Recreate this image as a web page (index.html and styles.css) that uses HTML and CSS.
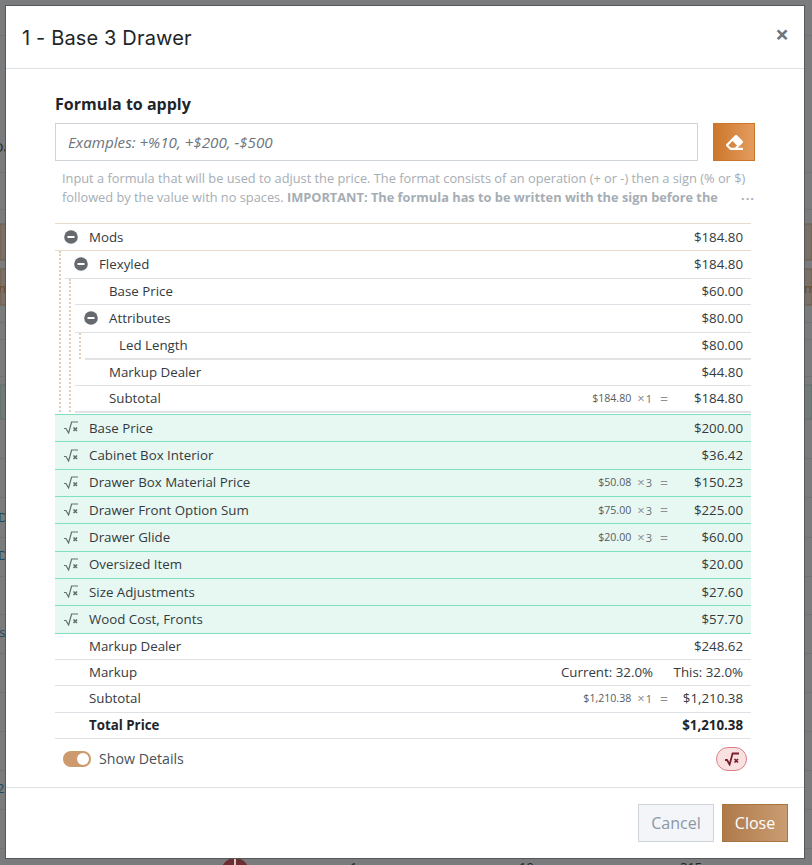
FILE: index.html
```html
<!DOCTYPE html>
<html lang="en">
<head>
<meta charset="utf-8">
<title>1 - Base 3 Drawer</title>
<link rel="stylesheet" href="styles.css">
</head>
<body>
<svg class="backdrop" width="812" height="865" aria-hidden="true">
  <g class="bd-line">
    <rect y="35" width="812" height="1"/><rect y="172" width="812" height="1"/><rect y="209" width="812" height="1"/>
    <rect y="322" width="812" height="1"/><rect y="339" width="812" height="1"/><rect y="376" width="812" height="1"/>
    <rect y="458" width="812" height="1"/><rect y="497" width="812" height="1"/><rect y="537" width="812" height="1"/>
    <rect y="576" width="812" height="1"/><rect y="614" width="812" height="1"/><rect y="653" width="812" height="1"/>
    <rect y="692" width="812" height="1"/><rect y="731" width="812" height="1"/><rect y="770" width="812" height="1"/>
    <rect y="809" width="812" height="1"/><rect y="848" width="812" height="1"/>
  </g>
  <rect class="bd-brown" y="224" width="812" height="36"/>
  <rect class="bd-brown" y="269" width="812" height="36"/>
  <rect class="bd-teal" y="385" width="812" height="34"/>
  <text class="bd-text" x="-6" y="152">Da</text>
  <text class="bd-text bd-brown-text" x="-6" y="293">m</text>
  <text class="bd-text bd-brown-text" x="804" y="293">m</text>
  <text class="bd-text bd-link" x="-2" y="522">D</text>
  <text class="bd-text bd-link" x="-2" y="560">D</text>
  <text class="bd-text bd-link" x="-8" y="637">es</text>
  <text class="bd-text bd-link" x="-3" y="793">2</text>
  <circle class="bd-dot" cx="235" cy="872" r="14"/>
  <rect class="bd-mark" x="234" y="858" width="2" height="7"/>
  <text class="bd-text" x="350" y="872">1</text>
  <text class="bd-text" x="519" y="872">10</text>
  <text class="bd-text" x="680" y="872">215</text>
</svg>

<section class="modal">
  <header class="modal-head">
    <h1 class="modal-title">1 - Base 3 Drawer</h1>
    <span class="modal-x">×</span>
  </header>

  <div class="modal-body">
    <label class="field-label">Formula to apply</label>
    <div class="field-row">
      <input class="field-input" type="text" placeholder="Examples: +%10, +$200, -$500">
      <button class="erase-btn" type="button" aria-label="Clear">
        <svg class="erase-icon" viewBox="0 0 512 512"><path d="M497.941 273.941c18.745-18.745 18.745-49.137 0-67.882l-160-160c-18.745-18.745-49.137-18.745-67.882 0l-256 256c-18.745 18.745-18.745 49.137 0 67.882l96 96A48.004 48.004 0 0 0 144 480h356c6.627 0 12-5.373 12-12v-40c0-6.627-5.373-12-12-12H355.883l142.058-142.059zm-302.627-62.627l137.373 137.373L265.373 416H150.628l-80-80 124.686-124.686z"/></svg>
      </button>
    </div>
    <div class="help">
      <div class="help-line">Input a formula that will be used to adjust the price. The format consists of an operation (+ or -) then a sign (% or $)</div>
      <div class="help-line help-last"><span>followed by the value with no spaces. <b>IMPORTANT: The formula has to be written with the sign before the</b></span><span class="help-more">···</span></div>
    </div>

    <div class="tree">
      <div class="row row-top h27 border-tan">
        <span class="glyph"><svg class="minus" viewBox="0 0 14 14"><circle cx="7" cy="7" r="6.8"/><rect x="3.5" y="6" width="7" height="2"/></svg></span>
        <span class="name">Mods</span><span class="amount">$184.80</span>
      </div>
      <div class="kids">
        <div class="row h28">
          <span class="glyph"><svg class="minus" viewBox="0 0 14 14"><circle cx="7" cy="7" r="6.8"/><rect x="3.5" y="6" width="7" height="2"/></svg></span>
          <span class="name">Flexyled</span><span class="amount">$184.80</span>
        </div>
        <div class="kids kids-end">
          <div class="row h26"><span class="glyph"></span><span class="name">Base Price</span><span class="amount">$60.00</span></div>
          <div class="row h28">
            <span class="glyph"><svg class="minus" viewBox="0 0 14 14"><circle cx="7" cy="7" r="6.8"/><rect x="3.5" y="6" width="7" height="2"/></svg></span>
            <span class="name">Attributes</span><span class="amount">$80.00</span>
          </div>
          <div class="kids kids-end">
            <div class="row h26"><span class="glyph"></span><span class="name">Led Length</span><span class="amount">$80.00</span></div>
          </div>
          <div class="row h26"><span class="glyph"></span><span class="name">Markup Dealer</span><span class="amount">$44.80</span></div>
          <div class="row h26"><span class="glyph"></span><span class="name">Subtotal</span><span class="calc"><span class="calc-price">$184.80</span><span class="calc-qty"><i>×</i>1</span><span class="calc-eq">=</span></span><span class="amount">$184.80</span></div>
        </div>
      </div>

      <div class="green-list">
        <div class="row green"><span class="glyph"><svg class="root" viewBox="0 0 16 13"><path class="root-s" d="M1 7.5h2l2.6 4.5L8.6 1H15"/><path class="root-x" d="M10.5 6.5l3.5 3.5m0-3.5l-3.5 3.5"/></svg></span><span class="name">Base Price</span><span class="amount">$200.00</span></div>
        <div class="row green"><span class="glyph"><svg class="root" viewBox="0 0 16 13"><path class="root-s" d="M1 7.5h2l2.6 4.5L8.6 1H15"/><path class="root-x" d="M10.5 6.5l3.5 3.5m0-3.5l-3.5 3.5"/></svg></span><span class="name">Cabinet Box Interior</span><span class="amount">$36.42</span></div>
        <div class="row green"><span class="glyph"><svg class="root" viewBox="0 0 16 13"><path class="root-s" d="M1 7.5h2l2.6 4.5L8.6 1H15"/><path class="root-x" d="M10.5 6.5l3.5 3.5m0-3.5l-3.5 3.5"/></svg></span><span class="name">Drawer Box Material Price</span><span class="calc"><span class="calc-price">$50.08</span><span class="calc-qty"><i>×</i>3</span><span class="calc-eq">=</span></span><span class="amount">$150.23</span></div>
        <div class="row green"><span class="glyph"><svg class="root" viewBox="0 0 16 13"><path class="root-s" d="M1 7.5h2l2.6 4.5L8.6 1H15"/><path class="root-x" d="M10.5 6.5l3.5 3.5m0-3.5l-3.5 3.5"/></svg></span><span class="name">Drawer Front Option Sum</span><span class="calc"><span class="calc-price">$75.00</span><span class="calc-qty"><i>×</i>3</span><span class="calc-eq">=</span></span><span class="amount">$225.00</span></div>
        <div class="row green"><span class="glyph"><svg class="root" viewBox="0 0 16 13"><path class="root-s" d="M1 7.5h2l2.6 4.5L8.6 1H15"/><path class="root-x" d="M10.5 6.5l3.5 3.5m0-3.5l-3.5 3.5"/></svg></span><span class="name">Drawer Glide</span><span class="calc"><span class="calc-price">$20.00</span><span class="calc-qty"><i>×</i>3</span><span class="calc-eq">=</span></span><span class="amount">$60.00</span></div>
        <div class="row green"><span class="glyph"><svg class="root" viewBox="0 0 16 13"><path class="root-s" d="M1 7.5h2l2.6 4.5L8.6 1H15"/><path class="root-x" d="M10.5 6.5l3.5 3.5m0-3.5l-3.5 3.5"/></svg></span><span class="name">Oversized Item</span><span class="amount">$20.00</span></div>
        <div class="row green"><span class="glyph"><svg class="root" viewBox="0 0 16 13"><path class="root-s" d="M1 7.5h2l2.6 4.5L8.6 1H15"/><path class="root-x" d="M10.5 6.5l3.5 3.5m0-3.5l-3.5 3.5"/></svg></span><span class="name">Size Adjustments</span><span class="amount">$27.60</span></div>
        <div class="row green"><span class="glyph"><svg class="root" viewBox="0 0 16 13"><path class="root-s" d="M1 7.5h2l2.6 4.5L8.6 1H15"/><path class="root-x" d="M10.5 6.5l3.5 3.5m0-3.5l-3.5 3.5"/></svg></span><span class="name">Wood Cost, Fronts</span><span class="amount">$57.70</span></div>
      </div>

      <div class="row h-end"><span class="glyph"></span><span class="name">Markup Dealer</span><span class="amount">$248.62</span></div>
      <div class="row h-end"><span class="glyph"></span><span class="name">Markup</span><span class="markup-now">Current: 32.0%</span><span class="amount">This: 32.0%</span></div>
      <div class="row h-end"><span class="glyph"></span><span class="name">Subtotal</span><span class="calc"><span class="calc-price">$1,210.38</span><span class="calc-qty"><i>×</i>1</span><span class="calc-eq">=</span></span><span class="amount">$1,210.38</span></div>
      <div class="row h-end row-total"><span class="glyph"></span><span class="name">Total Price</span><span class="amount">$1,210.38</span></div>
    </div>

    <div class="details">
      <span class="toggle"><span class="toggle-knob"></span></span>
      <span class="details-label">Show Details</span>
      <span class="formula-pill"><svg class="root root-strong" viewBox="0 0 16 13"><path class="root-s" d="M1 7.5h2l2.6 4.5L8.6 1H15"/><path class="root-x" d="M10.5 6.5l3.5 3.5m0-3.5l-3.5 3.5"/></svg></span>
    </div>
  </div>

  <footer class="modal-foot">
    <button class="btn btn-cancel" type="button">Cancel</button>
    <button class="btn btn-close" type="button">Close</button>
  </footer>
</section>
</body>
</html>
```
FILE: styles.css
```css
* { box-sizing: border-box; }
html, body { margin: 0; height: 100%; }
body {
  position: relative;
  overflow: hidden;
  background: #7a7b7c;
  font-family: "Open Sans", sans-serif;
  color: #343a40;
  padding: 6px 8px 0 6px;
}
.backdrop { position: absolute; left: 0; top: 0; }
.bd-line rect { fill: #6f7273; }
.bd-brown { fill: #7a7066; stroke: #6f5d48; }
.bd-teal { fill: #6f7a79; stroke: #5f6f6d; }
.bd-text { font: 13px "Open Sans", sans-serif; fill: #22262a; }
.bd-brown-text { fill: #6b4a22; }
.bd-link { fill: #1a4a60; }
.bd-dot { fill: #6b2f32; }
.bd-mark { fill: #d8c8c8; }

.modal {
  position: relative;
  width: 798px;
  height: 852px;
  background: #fff;
  box-shadow: 0 0 0 1px #55585a;
  display: flex;
  flex-direction: column;
}
.modal-head {
  height: 63px;
  flex: none;
  border-bottom: 1px solid #dee2e6;
  display: flex;
  align-items: center;
  justify-content: space-between;
  padding: 0 16px 0 16px;
}
.modal-title {
  margin: 0;
  font: 400 20px Inter, sans-serif;
  letter-spacing: 0.15px;
  color: #212529;
  position: relative;
  top: 1px;
}
.modal-x {
  font: 700 24px "Open Sans", sans-serif;
  color: #6c757d;
  line-height: 1;
  position: relative;
  top: -3px;
  left: 1px;
}
.modal-body { flex: 1; padding: 24px 49px 0 49px; }
.field-label {
  display: block;
  font-weight: 700;
  font-size: 16px;
  line-height: 22px;
  color: #212529;
  margin-bottom: 8px;
}
.field-row { display: flex; gap: 15px; height: 38px; width: 700px; }
.field-input {
  flex: 1;
  min-width: 0;
  border: 1px solid #ced4da;
  padding: 0 12px;
  font: 15.2px "Open Sans", sans-serif;
  background: #fff;
  outline: none;
}
.field-input::placeholder { font-style: italic; color: #6c757d; opacity: 1; }
.erase-btn {
  width: 42px;
  padding: 0;
  border: 1px solid #c9762a;
  background: linear-gradient(90deg, #cd772b, #e49c5f);
  display: flex;
  align-items: center;
  justify-content: center;
}
.erase-icon { width: 17px; height: 17px; fill: #fff; }
.help {
  width: 700px;
  padding: 8px 0 0 7px;
  font-size: 12.8px;
  line-height: 19px;
  color: #a6adb4;
  margin-bottom: 16px;
  white-space: nowrap;
}
.help-last { display: flex; justify-content: space-between; height: 19px; }
.help-more { font-weight: 700; letter-spacing: 1px; padding-top: 1px; }

.tree { width: 696px; font-size: 13.3px; border-top: 1px solid #e8dacd; }
.row {
  display: flex;
  align-items: center;
  padding-right: 8px;
  padding-bottom: 1px;
  border-bottom: 1px solid #dee2e6;
  color: #343a40;
}
.row-top { padding-bottom: 0; }
.h26 { height: 26px; }
.h27 { height: 27px; }
.h28 { height: 28px; }
.h-end { height: 26.3px; }
.border-tan { border-bottom-color: #e8dacd; }
.glyph {
  width: 34px;
  flex: none;
  display: flex;
  justify-content: center;
  padding-right: 2px;
}
.minus { width: 14px; height: 14px; display: block; }
.minus circle { fill: #666a6e; }
.minus rect { fill: #fff; }
.root { width: 16px; height: 13px; display: block; }
.root-s { fill: none; stroke: #5f706b; stroke-width: 1.2; }
.root-x { fill: none; stroke: #5f706b; stroke-width: 1.6; }
.root-strong { height: 14px; }
.root-strong .root-s { stroke: #7a1f2c; stroke-width: 1.8; }
.root-strong .root-x { stroke: #7a1f2c; stroke-width: 1.7; }
.name { flex: 1; white-space: nowrap; }
.amount { width: 70px; text-align: right; flex: none; white-space: nowrap; }
.calc {
  display: flex;
  align-items: center;
  font-size: 10.6px;
  color: #555b60;
  white-space: nowrap;
  margin-right: 5px;
}
.calc-qty { margin-left: 6px; font-size: 11px; color: #6a7075; }
.calc-qty i { font-style: normal; font-size: 13px; color: #8a9095; margin-right: 1px; }
.calc-eq { margin-left: 8px; width: 8px; font-size: 14px; color: #8a9095; text-align: center; }
.markup-now { margin-right: 20px; white-space: nowrap; }

.kids {
  margin-left: 4px;
  border-left: 2px dotted #e6cdb6;
  padding-left: 4px;
}
.kids-end > .row:last-child { border-bottom: 1px solid #dee2e6; box-shadow: 0 1px 0 #e3e3e3; margin-bottom: 1px; }

.green-list { border-top: 1px solid #7fe0c1; margin-top: 2px; }
.green {
  height: 27.35px;
  background: #e7f8f2;
  border-bottom: 1px solid #7fe0c1;
}
.row-total { font-weight: 700; color: #212529; }

.details {
  width: 692px;
  display: flex;
  align-items: center;
  height: 40px;
  margin-left: 8px;
}
.toggle {
  width: 28px;
  height: 16px;
  border-radius: 8px;
  background: #cc9a6c;
  display: flex;
  justify-content: flex-end;
  align-items: center;
  padding-right: 2px;
}
.toggle-knob { width: 12px; height: 12px; border-radius: 50%; background: #fff; }
.details-label { margin-left: 8px; font-size: 14.2px; color: #495057; flex: 1; }
.formula-pill {
  width: 31px;
  height: 24px;
  border-radius: 12px;
  background: #f9e0e1;
  border: 1px solid #d8808a;
  display: flex;
  align-items: center;
  justify-content: center;
  margin-right: 8px;
}

.modal-foot {
  flex: none;
  height: 71px;
  border-top: 1px solid #dee2e6;
  display: flex;
  justify-content: flex-end;
  gap: 8px;
  padding: 16px 16px 0 0;
}
.btn {
  height: 38px;
  font: 16px "Open Sans", sans-serif;
  padding: 0;
}
.btn-cancel { width: 76px; background: #f3f5f8; border: 1px solid #ced4da; color: #8b97a5; }
.btn-close { width: 66px; background: linear-gradient(90deg, #ae7a4a, #ca9c72); border: 1px solid #a8743f; color: #fff; }
```
